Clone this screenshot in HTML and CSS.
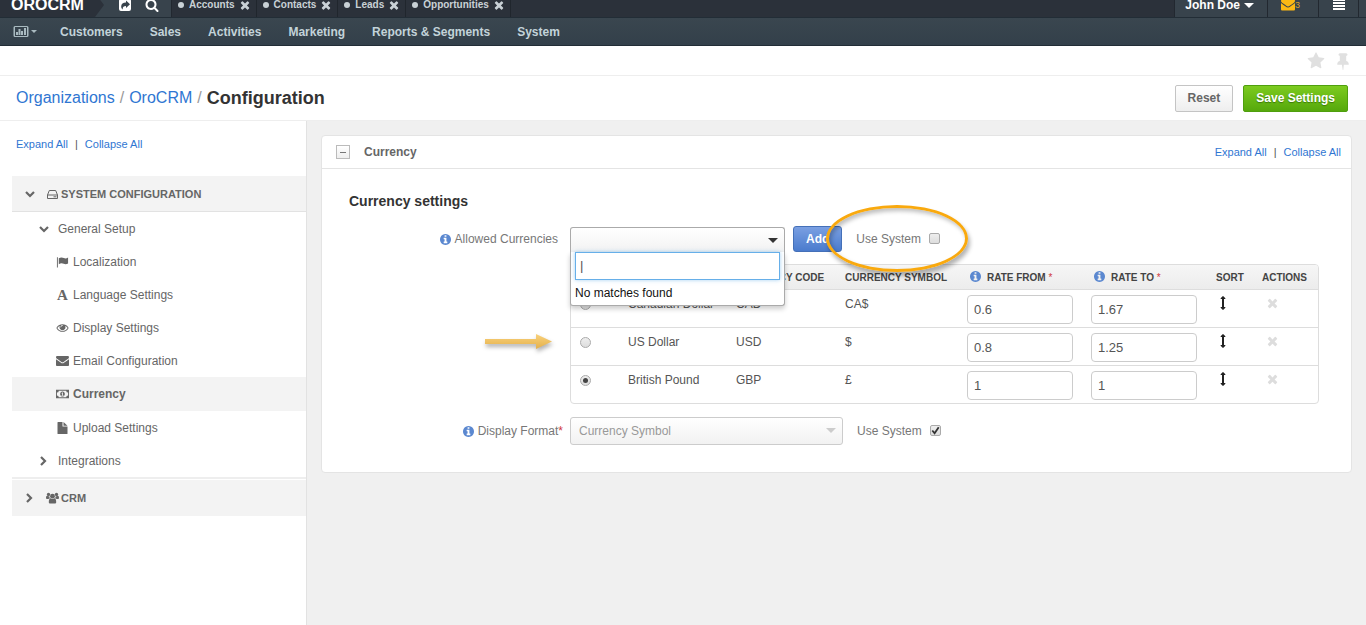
FILE: index.html
```html
<!DOCTYPE html>
<html lang="en">
<head>
  <meta charset="UTF-8" />
  <title>Configuration - OroCRM</title>
  <link rel="stylesheet" href="styles.css">
</head>
<body>
  <!-- Icon set -->
  <svg class="sprite" aria-hidden="true">
    <symbol id="i-times" viewBox="192 192 1408 1408"><path d="M1490 1322q0 40-28 68l-136 136q-28 28-68 28t-68-28l-294-294-294 294q-28 28-68 28t-68-28l-136-136q-28-28-28-68t28-68l294-294-294-294q-28-28-28-68t28-68l136-136q28-28 68-28t68 28l294 294 294-294q28-28 68-28t68 28l136 136q28 28 28 68t-28 68l-294 294 294 294q28 28 28 68z"/></symbol>
    <symbol id="i-star" viewBox="0 0 1792 1792"><path d="M1728 647q0 22-26 48l-363 354 86 500q1 7 1 20 0 21-10.5 35.5t-30.5 14.5q-19 0-40-12l-449-236-449 236q-22 12-40 12-21 0-31.5-14.5t-10.5-35.5q0-6 2-20l86-500-364-354q-25-27-25-48 0-37 56-46l502-73 225-455q19-41 49-41t49 41l225 455 502 73q56 9 56 46z"/></symbol>
    <symbol id="i-pin" viewBox="0 0 1792 1792"><path d="M1472 1216q0 26-19 45t-45 19h-429l-51 483q-2 12-10.5 20.5t-20.5 8.500h-1q-27 0-32-27l-76-485h-404q-26 0-45-19t-19-45q0-123 78.500-221.500t177.500-98.500v-512q-52 0-90-38t-38-90 38-90 90-38h640q52 0 90 38t38 90-38 90-90 38v512q99 0 177.500 98.500t78.500 221.500z"/></symbol>
    <symbol id="i-info" viewBox="128 128 1536 1536"><path d="M1152 1376v-160q0-14-9-23t-23-9h-96v-512q0-14-9-23t-23-9h-320q-14 0-23 9t-9 23v160q0 14 9 23t23 9h96v320h-96q-14 0-23 9t-9 23v160q0 14 9 23t23 9h448q14 0 23-9t9-23zm-128-896v-160q0-14-9-23t-23-9h-192q-14 0-23 9t-9 23v160q0 14 9 23t23 9h192q14 0 23-9t9-23zm640 416q0 209-103 385.5t-279.5 279.5-385.5 103-385.5-103-279.5-279.5-103-385.5 103-385.5 279.5-279.5 385.5-103 385.5 103 279.5 279.5 103 385.5z"/></symbol>
    <symbol id="i-search" viewBox="0 0 1792 1792"><path d="M1216 832q0-185-131.5-316.5t-316.5-131.5-316.5 131.5-131.5 316.5 131.5 316.5 316.5 131.5 316.5-131.5 131.5-316.5zm512 832q0 52-38 90t-90 38q-54 0-90-38l-343-342q-179 124-399 124-143 0-273.5-55.5t-225-150-150-225-55.5-273.5 55.5-273.5 150-225 225-150 273.5-55.5 273.5 55.5 225 150 150 225 55.5 273.5q0 220-124 399l343 343q37 37 37 90z"/></symbol>
    <symbol id="i-share" viewBox="0 0 14 14"><path fill-rule="evenodd" d="M3 1h8a2 2 0 0 1 2 2v8a2 2 0 0 1-2 2H3a2 2 0 0 1-2-2V3a2 2 0 0 1 2-2zM8 2.500V4.500C5 4.500 3.200 6 3.200 8.500c0 1.300.6 2.300 1.500 3C4.500 9.500 5.500 8 8 8v2l4-3.700z"/></symbol>
    <symbol id="i-chart" viewBox="0 0 16 14"><path fill-rule="evenodd" d="M2 1h12a1.500 1.500 0 0 1 1.500 1.500v8a1.500 1.500 0 0 1-1.500 1.500H2A1.500 1.500 0 0 1 .5 10.500v-8A1.500 1.500 0 0 1 2 1zm0 1v9h12V2zM3 7h2v3H3zM5.500 4h2v6h-2zM8 6h2v4H8zM11 3h2v7h-2z"/></symbol>
    <symbol id="i-envelope" viewBox="0 256 1792 1408"><path d="M1792 710v794q0 66-47 113t-113 47h-1472q-66 0-113-47t-47-113v-794q44 49 101 87 362 246 497 345 57 42 92.500 65.500t94.500 48 110 24.500h2q51 0 110-24.500t94.500-48 92.500-65.500q170-123 498-345 57-39 100-87zm0-294q0 79-49 151t-122 123q-376 261-468 325-10 7-42.500 31t-54 38.500-52 32.500-57.500 27-50 9h-2q-23 0-50-9t-57.500-27-52-32.500-54-38.500-42.500-31q-91-64-262-182.500t-205-142.500q-62-42-117-115.500t-55-136.500q0-78 41.500-130t118.500-52h1472q65 0 112.500 47t47.500 113z"/></symbol>
    <symbol id="i-eye" viewBox="0 64 1792 1792"><path d="M1664 960q-152-236-381-353 61 104 61 225 0 185-131.500 316.500t-316.500 131.500-316.500-131.500-131.500-316.500q0-121 61-225-229 117-381 353 133 205 333.500 326.500t434.500 121.500 434.500-121.500 333.500-326.500zm-720-384q0-20-14-34t-34-14q-125 0-214.500 89.500t-89.500 214.500q0 20 14 34t34 14 34-14 14-34q0-86 61-147t147-61q20 0 34-14t14-34zm848 384q0 34-20 69-140 230-376.500 368.500t-499.500 138.500-499.500-139-376.500-368q-20-35-20-69t20-69q140-229 376.500-368t499.500-139 499.500 139 376.500 368q20 35 20 69z"/></symbol>
    <symbol id="i-updown" viewBox="0 0 1792 1792"><path d="M1216 320q0 26-19 45t-45 19h-128v1024h128q26 0 45 19t19 45-19 45l-256 256q-19 19-45 19t-45-19l-256-256q-19-19-19-45t19-45 45-19h128v-1024h-128q-26 0-45-19t-19-45 19-45l256-256q19-19 45-19t45 19l256 256q19 19 19 45z"/></symbol>
    <symbol id="i-down" viewBox="0 0 12 12"><path d="M2 4l4 4 4-4" fill="none" stroke="currentColor" stroke-width="2.200"/></symbol>
    <symbol id="i-right" viewBox="0 0 12 12"><path d="M3 2l4 4-4 4" fill="none" stroke="currentColor" stroke-width="2.200"/></symbol>
    <symbol id="i-hdd" viewBox="0 0 12 12"><path d="M1 7l1.800-4.500h6.400L11 7v3.500H1zM1 7h10" fill="none" stroke="currentColor"/><path d="M7 8.300h3v1H7z"/></symbol>
    <symbol id="i-flag" viewBox="0 1 14 12"><path d="M1 2h1v11H1zM3 3c2-1.300 4-1 5.500-.2 1.500.7 3 .4 4.500-.6v6.400c-1.500 1-3 1.200-4.700.4C6.500 8.200 5 8.200 3 9.400z"/></symbol>
    <symbol id="i-money" viewBox="0 1 14 12"><path fill-rule="evenodd" d="M0 2.500h14v9H0zM3 3.500a2 2 0 0 1-2 2v3a2 2 0 0 1 2 2h8a2 2 0 0 1 2-2v-3a2 2 0 0 1-2-2zM7 4.200c1.500 0 2.500 1.200 2.500 2.800S8.500 9.800 7 9.800 4.500 8.600 4.500 7 5.500 4.200 7 4.200zM6 5.800v.7h.6v1.600H6v.7h2v-.7h-.5V5.400h-.7z"/></symbol>
    <symbol id="i-file" viewBox="0 1 12 12"><path d="M1.500 1H6v4.500h5v7a.5.5 0 0 1-.5.500h-9a.5.5 0 0 1-.5-.5v-11a.5.5 0 0 1 .5-.5zM7 1l4 3.700H7z"/></symbol>
    <symbol id="i-group" viewBox="0 0 14 12"><circle cx="7" cy="4" r="2.600"/><circle cx="2.700" cy="2.200" r="1.800"/><circle cx="11.300" cy="2.200" r="1.800"/><path d="M3 10.500C3 8 3.800 6.500 5 6.400c1.200 1 2.800 1 4 0 1.200.1 2 1.600 2 4.100 0 1-.7 1.500-1.500 1.500h-5C3.700 12 3 11.500 3 10.500zM0 6c0-1.500.5-2.200 1.200-2.300.8.600 1.600.6 2.400.3 0 1 .2 1.600.7 2.200-.7 0-1.300.4-1.700 1H1C.4 7.200 0 6.800 0 6zM14 6c0-1.500-.5-2.200-1.200-2.300-.8.600-1.600.6-2.400.3 0 1-.2 1.600-.7 2.200.7 0 1.300.4 1.700 1H13c.6 0 1-.4 1-1.200z"/></symbol>
    <symbol id="i-menu" viewBox="0 0 12 14"><path d="M0 1h12v2H0zM0 4h12v2H0zM0 7h12v2H0zM0 10h12v2H0z"/></symbol>
    <symbol id="i-check" viewBox="0 0 12 12"><path d="M2.500 6l2.500 3 4.500-6.500" fill="none" stroke="currentColor" stroke-width="2"/></symbol>
  </svg>

  <header class="topbar">
    <a class="logo" href="#">OROCRM</a>
    <div class="shortcuts">
      <button class="plain" type="button" aria-label="Shortcuts"><svg class="icon"><use href="#i-share"/></svg></button>
      <button class="plain" type="button" aria-label="Search"><svg class="icon"><use href="#i-search"/></svg></button>
    </div>
    <ul class="tabs">
      <li><a href="#">Accounts</a><button class="plain" type="button" aria-label="Close"><svg class="icon"><use href="#i-times"/></svg></button></li>
      <li><a href="#">Contacts</a><button class="plain" type="button" aria-label="Close"><svg class="icon"><use href="#i-times"/></svg></button></li>
      <li><a href="#">Leads</a><button class="plain" type="button" aria-label="Close"><svg class="icon"><use href="#i-times"/></svg></button></li>
      <li><a href="#">Opportunities</a><button class="plain" type="button" aria-label="Close"><svg class="icon"><use href="#i-times"/></svg></button></li>
    </ul>
    <div class="user-menu">
      <button class="plain user-name" type="button">John Doe <span class="caret"></span></button>
      <a class="mail" href="#" aria-label="Emails"><svg class="icon"><use href="#i-envelope"/></svg><span>3</span></a>
      <button class="plain menu-toggle" type="button" aria-label="Menu"><svg class="icon"><use href="#i-menu"/></svg></button>
    </div>
  </header>

  <nav class="main-nav">
    <a class="dashboard" href="#" aria-label="Dashboards"><svg class="icon"><use href="#i-chart"/></svg><span class="caret"></span></a>
    <a href="#">Customers</a>
    <a href="#">Sales</a>
    <a href="#">Activities</a>
    <a href="#">Marketing</a>
    <a href="#">Reports &amp; Segments</a>
    <a href="#">System</a>
  </nav>

  <div class="page-tools">
    <button class="plain" type="button" aria-label="Favorite"><svg class="icon"><use href="#i-star"/></svg></button>
    <button class="plain" type="button" aria-label="Pin"><svg class="icon"><use href="#i-pin"/></svg></button>
  </div>

  <div class="page-title">
    <div class="breadcrumb">
      <a href="#">Organizations</a><span>/</span><a href="#">OroCRM</a><span>/</span><h1>Configuration</h1>
    </div>
    <div class="buttons">
      <button class="btn" type="button">Reset</button>
      <button class="btn btn-success" type="button">Save Settings</button>
    </div>
  </div>

  <div class="layout">
    <aside class="sidebar">
      <div class="toggle-links"><a href="#">Expand All</a><span>|</span><a href="#">Collapse All</a></div>
      <ul class="tree">
        <li class="group"><svg class="icon arrow"><use href="#i-down"/></svg><a href="#"><svg class="icon"><use href="#i-hdd"/></svg>SYSTEM CONFIGURATION</a></li>
        <li class="section"><svg class="icon arrow"><use href="#i-down"/></svg><a href="#">General Setup</a></li>
        <li class="item"><a href="#"><svg class="icon"><use href="#i-flag"/></svg>Localization</a></li>
        <li class="item"><a href="#"><span class="letter" aria-hidden="true">A</span>Language Settings</a></li>
        <li class="item"><a href="#"><svg class="icon"><use href="#i-eye"/></svg>Display Settings</a></li>
        <li class="item"><a href="#"><svg class="icon"><use href="#i-envelope"/></svg>Email Configuration</a></li>
        <li class="item active"><a href="#"><svg class="icon"><use href="#i-money"/></svg>Currency</a></li>
        <li class="item"><a href="#"><svg class="icon"><use href="#i-file"/></svg>Upload Settings</a></li>
        <li class="section"><svg class="icon arrow"><use href="#i-right"/></svg><a href="#">Integrations</a></li>
        <li class="group last"><svg class="icon arrow"><use href="#i-right"/></svg><a href="#"><svg class="icon"><use href="#i-group"/></svg>CRM</a></li>
      </ul>
    </aside>

    <main class="content">
      <section class="card">
        <div class="card-header">
          <button class="collapse" type="button" aria-label="Collapse"></button>
          <h2>Currency</h2>
          <div class="toggle-links"><a href="#">Expand All</a><span>|</span><a href="#">Collapse All</a></div>
        </div>
        <form class="card-body">
          <h3>Currency settings</h3>

          <div class="field">
            <label class="field-label" for="allowed"><svg class="icon info"><use href="#i-info"/></svg>Allowed Currencies</label>
            <div class="controls">
              <div class="picker">
                <select id="allowed" class="select open"><option></option></select>
                <div class="dropdown">
                  <input type="text" value="|" aria-label="Search currency">
                  <p>No matches found</p>
                </div>
              </div>
              <button class="btn btn-primary" type="button">Add</button>
              <div class="use-system highlighted">
                <label for="sys1">Use System</label>
                <span class="tick"><input type="checkbox" id="sys1"><svg><use href="#i-check"/></svg></span>
              </div>
            </div>
          </div>

          <div class="field">
            <div class="pointer">
              <svg viewBox="0 0 68 18">
                <defs><linearGradient id="gold" x1="0" y1="0" x2="0" y2="1"><stop offset="0" stop-color="#fad27c"/><stop offset="1" stop-color="#e3b04b"/></linearGradient></defs>
                <path fill="url(#gold)" d="M0 6h51V1l16 7.500L51 16v-5H0z"/>
              </svg>
            </div>
            <div class="table-wrap">
            <table>
              <colgroup><col class="c-radio"><col class="c-name"><col class="c-code"><col class="c-symbol"><col class="c-rate"><col class="c-rate"><col class="c-sort"><col class="c-actions"></colgroup>
              <thead>
                <tr>
                  <th></th>
                  <th>CURRENCY</th>
                  <th>CURRENCY CODE</th>
                  <th>CURRENCY SYMBOL</th>
                  <th><svg class="icon info"><use href="#i-info"/></svg>RATE FROM <em>*</em></th>
                  <th><svg class="icon info"><use href="#i-info"/></svg>RATE TO <em>*</em></th>
                  <th>SORT</th>
                  <th>ACTIONS</th>
                </tr>
              </thead>
              <tbody>
                <tr>
                  <td><input type="radio" name="default" aria-label="Canadian Dollar"></td>
                  <td>Canadian Dollar</td>
                  <td>CAD</td>
                  <td>CA$</td>
                  <td><input type="text" value="0.6" aria-label="Rate from"></td>
                  <td><input type="text" value="1.67" aria-label="Rate to"></td>
                  <td><svg class="icon sort"><use href="#i-updown"/></svg></td>
                  <td><button class="plain remove" type="button" aria-label="Remove"><svg class="icon"><use href="#i-times"/></svg></button></td>
                </tr>
                <tr>
                  <td><input type="radio" name="default" aria-label="US Dollar"></td>
                  <td>US Dollar</td>
                  <td>USD</td>
                  <td>$</td>
                  <td><input type="text" value="0.8" aria-label="Rate from"></td>
                  <td><input type="text" value="1.25" aria-label="Rate to"></td>
                  <td><svg class="icon sort"><use href="#i-updown"/></svg></td>
                  <td><button class="plain remove" type="button" aria-label="Remove"><svg class="icon"><use href="#i-times"/></svg></button></td>
                </tr>
                <tr>
                  <td><input type="radio" name="default" aria-label="British Pound" checked></td>
                  <td>British Pound</td>
                  <td>GBP</td>
                  <td>£</td>
                  <td><input type="text" value="1" aria-label="Rate from"></td>
                  <td><input type="text" value="1" aria-label="Rate to"></td>
                  <td><svg class="icon sort"><use href="#i-updown"/></svg></td>
                  <td><button class="plain remove" type="button" aria-label="Remove"><svg class="icon"><use href="#i-times"/></svg></button></td>
                </tr>
              </tbody>
            </table>
            </div>
          </div>

          <div class="field">
            <label class="field-label required" for="format"><svg class="icon info"><use href="#i-info"/></svg>Display Format<em>*</em></label>
            <div class="controls">
              <div class="picker wide">
                <select id="format" class="select" disabled><option>Currency Symbol</option></select>
              </div>
              <div class="use-system">
                <label for="sys2">Use System</label>
                <span class="tick"><input type="checkbox" id="sys2" checked><svg><use href="#i-check"/></svg></span>
              </div>
            </div>
          </div>
        </form>
      </section>
    </main>
  </div>
</body>
</html>
```

FILE: styles.css
```css
* {
  box-sizing: border-box;
}
body {
  display: flex;
  flex-direction: column;
  min-height: 100vh;
  margin: 0;
  font-family: "Liberation Sans", Arial, sans-serif;
  font-size: 12px;
  line-height: 16px;
  color: #555;
  background: #fff;
}
h1, h2, h3, p, ul {
  margin: 0;
  padding: 0;
}
ul {
  list-style: none;
}
a {
  color: inherit;
  text-decoration: none;
}
input, select, button {
  font-family: inherit;
  margin: 0;
}
em {
  font-style: normal;
  color: #d0393e;
}
.sprite {
  display: none;
}
.icon {
  flex: none;
  width: 14px;
  height: 14px;
  fill: currentColor;
}
.plain {
  display: flex;
  align-items: center;
  padding: 0;
  border: 0;
  background: none;
  color: inherit;
  cursor: pointer;
}
.caret {
  border: 5px solid transparent;
  border-top-color: currentColor;
  border-bottom: 0;
}

/* Top bar, partly scrolled out */
.topbar {
  display: flex;
  height: 24px;
  margin-top: -7px;
  background: #2b313a;
  color: #fff;
}
.logo {
  position: relative;
  z-index: 1;
  width: 104px;
  padding: 0 11px;
  font-size: 16px;
  font-weight: bold;
  line-height: 24px;
  background: #2b313a;
  clip-path: polygon(0 0, 95px 0, 100% 50%, 95px 100%, 0 100%);
}
.shortcuts {
  display: flex;
  gap: 13px;
  width: 172px;
  margin-left: -104px;
  padding-left: 118px;
  background: #38434c;
  border-right: 1px solid #222830;
}
.tabs {
  display: flex;
  flex: 1;
  font-size: 10px;
  font-weight: bold;
  color: #c9d1d6;
}
.tabs li {
  display: flex;
  align-items: center;
  gap: 5px;
  padding: 0 6px;
  border-right: 1px solid #20262d;
}
.tabs li::before {
  content: "";
  width: 6px;
  height: 6px;
  border-radius: 50%;
  background: #c9d1d6;
}
.tabs .icon {
  width: 10px;
  height: 10px;
}
.user-menu {
  display: flex;
  align-items: center;
  padding-right: 7px;
  background: #38434c;
  border-left: 1px solid #222830;
}
.user-menu > * {
  height: 24px;
  border-right: 1px solid #222830;
}
.user-name {
  gap: 4px;
  padding: 0 13px 0 10px;
  font-size: 12px;
  font-weight: bold;
}
.mail {
  display: flex;
  align-items: center;
  width: 51px;
  padding-left: 13px;
  color: #fcb813;
  font-size: 9px;
}
.mail span {
  color: #d9a02c;
}
.menu-toggle {
  width: 40px;
  padding-left: 13px;
}

.main-nav {
  display: flex;
  align-items: center;
  gap: 27px;
  height: 29px;
  padding: 0 13px;
  font-weight: bold;
  color: #c3d3d9;
  background: linear-gradient(#3a464f, #33404a);
  border-top: 1px solid #222d36;
  border-bottom: 1px solid #222d36;
}
.dashboard {
  display: flex;
  align-items: center;
  gap: 2px;
  width: 20px;
  color: #a9bac0;
}
.dashboard .icon {
  width: 16px;
}
.dashboard .caret {
  border-width: 3px;
  border-bottom: 0;
}

.page-tools {
  display: flex;
  justify-content: flex-end;
  gap: 9px;
  height: 30px;
  padding: 0 14px;
  color: #e0e0e0;
  border-bottom: 1px solid #eee;
}
.page-tools .icon {
  width: 18px;
  height: 18px;
}
.page-title {
  display: flex;
  align-items: center;
  justify-content: space-between;
  height: 44px;
  padding: 0 18px 0 16px;
}
.breadcrumb {
  display: flex;
  align-items: center;
  gap: 5px;
  font-size: 16px;
  line-height: 20px;
  color: #999;
}
.breadcrumb a {
  color: #2f76d2;
}
h1 {
  font-size: 18px;
  color: #333;
}
.buttons {
  display: flex;
  gap: 10px;
}
.btn {
  height: 27px;
  padding: 0 12px;
  font-size: 12px;
  font-weight: bold;
  color: #666;
  background: linear-gradient(#fff, #eee);
  border: 1px solid #c4c4c4;
  border-radius: 2px;
  cursor: pointer;
}
.btn-success {
  color: #fff;
  background: linear-gradient(#7ccb1f, #56a80c);
  border-color: #4f9f0e;
  text-shadow: 0 1px 1px #3c7a08;
}
.btn-primary {
  height: 26px;
  color: #fff;
  background: linear-gradient(#7a9fe2, #4a7bcd);
  border-color: #4470b8;
  border-radius: 3px;
}

.layout {
  display: flex;
  flex: 1;
  border-top: 1px solid #eee;
}
.sidebar {
  width: 307px;
  padding-left: 12px;
  border-right: 1px solid #e2e2e2;
}
.toggle-links {
  display: flex;
  gap: 7px;
  font-size: 11px;
  color: #555;
}
.toggle-links a {
  color: #2f76d2;
}
.sidebar .toggle-links {
  padding: 15px 4px 24px;
}
.tree li {
  display: flex;
  align-items: center;
  height: 33px;
  color: #666;
}
.tree a {
  display: flex;
  align-items: center;
  gap: 4px;
}
.tree .arrow {
  width: 12px;
  height: 12px;
}
.tree .group {
  height: 36px;
  padding-left: 12px;
  gap: 10px;
  font-size: 11px;
  font-weight: bold;
  background: #f3f3f3;
  border-bottom: 1px solid #e2e2e2;
}
.group a {
  gap: 2px;
}
.group a .icon {
  width: 13px;
  height: 12px;
}
.tree .last {
  margin-top: 3px;
  border-bottom: 0;
  box-shadow: 0 -1px #fff, 0 -3px #eee;
}
.tree .section {
  padding-left: 26px;
  gap: 8px;
}
.tree .item {
  padding-left: 44px;
}
.item .icon {
  width: 13px;
  height: 12px;
}
.letter {
  width: 13px;
  font-family: "Liberation Serif", serif;
  font-size: 15px;
  font-weight: bold;
  text-align: center;
}
.tree .active {
  height: 34px;
  font-weight: bold;
  background: #f3f3f3;
}

.content {
  flex: 1;
  padding: 14px;
  background: #f0f0f0;
}
.card {
  background: #fff;
  border: 1px solid #e4e4e4;
  border-radius: 4px;
}
.card-header {
  display: flex;
  align-items: center;
  gap: 14px;
  height: 33px;
  padding: 0 10px 0 14px;
  border-bottom: 1px solid #e4e4e4;
}
.card-header .toggle-links {
  margin-left: auto;
}
.collapse {
  display: grid;
  place-items: center;
  width: 14px;
  height: 14px;
  padding: 0;
  background: linear-gradient(#fff, #eee);
  border: 1px solid #bbb;
}
.collapse::before {
  content: "";
  width: 6px;
  height: 1px;
  background: #777;
}
h2 {
  font-size: 12px;
  color: #666;
}
.card-body {
  display: flex;
  flex-direction: column;
  gap: 12px;
  padding: 24px 32px 27px 27px;
}
h3 {
  margin-bottom: 5px;
  font-size: 14px;
  color: #333;
}
.field {
  display: grid;
  grid-template-columns: 214px 1fr;
  gap: 7px;
}
.field:last-child {
  margin-top: 1px;
}
.field-label {
  display: flex;
  align-items: center;
  justify-content: flex-end;
  padding-right: 5px;
  color: #777;
}
.field-label.required {
  padding-right: 0;
}
.info {
  width: 11px;
  height: 11px;
  margin-right: 4px;
  color: #5b88d0;
}
.controls {
  display: flex;
  align-items: center;
}
.picker {
  position: relative;
  width: 215px;
  margin-right: 8px;
}
.picker.wide {
  width: 273px;
  margin-right: 0;
}
.select {
  display: block;
  width: 100%;
  height: 28px;
  padding: 0 8px;
  font-size: 12px;
  color: #444;
  appearance: none;
  background: linear-gradient(#fff, #f2f2f2);
  border: 1px solid #ccc;
  border-radius: 3px;
}
.select.open {
  height: 25px;
  border-color: #aaa;
  border-bottom: 0;
  border-radius: 3px 3px 0 0;
}
.select:disabled {
  color: #999;
  opacity: 1;
}
.picker::after {
  content: "";
  position: absolute;
  top: 11px;
  right: 7px;
  border: 5px solid transparent;
  border-top-color: #333;
  border-bottom: 0;
}
.picker.wide::after {
  border-top-color: #ccc;
}
.dropdown {
  position: absolute;
  top: 100%;
  left: 0;
  z-index: 2;
  width: 100%;
  padding: 0 4px 4px;
  color: #111;
  background: #fff;
  border: 1px solid #aaa;
  border-top: 0;
  border-radius: 0 0 3px 3px;
  box-shadow: 0 3px 5px rgba(0, 0, 0, 0.2);
}
.dropdown input {
  display: block;
  width: 100%;
  height: 28px;
  margin-bottom: 5px;
  padding: 0 4px;
  font-size: 13px;
  color: #555;
  border: 1px solid #66afe9;
  outline: 0;
  box-shadow: 0 0 4px rgba(102, 175, 233, 0.6);
}
.use-system {
  position: relative;
  display: flex;
  align-items: center;
  gap: 8px;
  margin-left: 14px;
  color: #777;
}
/* Orange ring that calls out the option */
.highlighted::after {
  content: "";
  position: absolute;
  inset: -26px -28px -25px -30px;
  z-index: 3;
  border: 3px solid #f9a90e;
  border-radius: 50%;
  box-shadow: 2px 4px 4px rgba(0, 0, 0, 0.3), inset 2px 3px 4px rgba(0, 0, 0, 0.25);
  pointer-events: none;
}
input[type="checkbox"],
input[type="radio"] {
  display: grid;
  place-items: center;
  width: 11px;
  height: 11px;
  appearance: none;
  background: linear-gradient(#eee, #ddd);
  border: 1px solid #aaa;
  border-radius: 2px;
}
input[type="radio"] {
  margin-top: 3px;
  border-radius: 50%;
}
input[type="radio"]:checked::before {
  content: "";
  width: 5px;
  height: 5px;
  border-radius: 50%;
  background: #444;
}
.tick {
  display: grid;
  place-items: center;
  margin-bottom: 2px;
}
.tick > * {
  grid-area: 1 / 1;
}
.tick svg {
  display: none;
  width: 11px;
  height: 11px;
  color: #333;
  pointer-events: none;
}
.tick input:checked + svg {
  display: block;
}

.pointer {
  padding: 69px 0 0 136px;
}
.pointer svg {
  display: block;
  width: 68px;
  height: 18px;
  filter: drop-shadow(1px 3px 2px rgba(0, 0, 0, 0.3));
}
.table-wrap {
  border: 1px solid #ddd;
  border-radius: 4px;
  overflow: hidden;
}
table {
  width: 100%;
  table-layout: fixed;
  border-collapse: separate;
  border-spacing: 0;
}
.c-radio { width: 47px; }
.c-name { width: 108px; }
.c-code { width: 109px; }
.c-symbol { width: 122px; }
.c-rate { width: 124px; }
.c-sort { width: 47px; }
.c-actions { width: 66px; }
th {
  height: 24px;
  padding: 1px 0 0 10px;
  font-size: 10px;
  text-align: left;
  white-space: nowrap;
  color: #444;
  background: linear-gradient(#f6f6f6, #ececec);
}
th .info {
  margin-right: 6px;
  vertical-align: -1px;
}
th em {
  font-weight: normal;
}
td {
  height: 38px;
  padding: 6px 0 0 10px;
  vertical-align: top;
  border-top: 1px solid #ddd;
}
td:first-child {
  padding-left: 9px;
}
td:nth-child(5),
td:nth-child(6) {
  padding-top: 5px;
}
th:nth-child(5),
th:nth-child(6) {
  padding-left: 13px;
}
th:nth-child(7),
td:nth-child(7) {
  padding-left: 11px;
}
td input[type="text"] {
  display: block;
  width: 106px;
  height: 29px;
  padding: 0 6px;
  font-size: 13px;
  color: #555;
  border: 1px solid #ccc;
  border-radius: 4px;
}
.sort {
  color: #222;
}
.remove {
  margin-left: 5px;
  color: #ddd;
}
.remove .icon {
  width: 11px;
  height: 14px;
}
```
